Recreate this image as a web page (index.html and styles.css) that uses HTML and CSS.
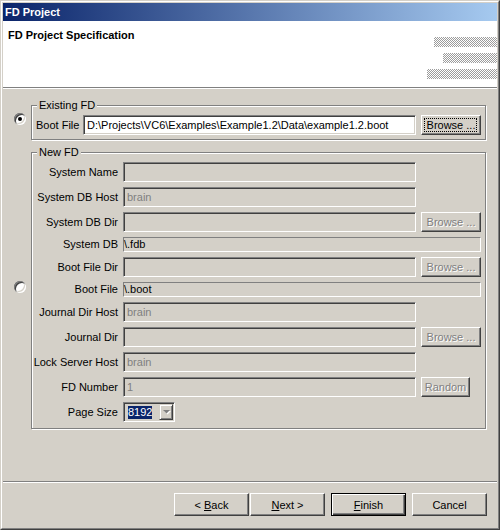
FILE: index.html
```html
<!DOCTYPE html>
<html>
<head>
<meta charset="utf-8">
<title>FD Project</title>
<link rel="stylesheet" href="styles.css">
</head>
<body>
<div class="window">
  <div class="frame">
    <div class="titlebar">FD Project</div>
    <div class="header">
      <div class="header-title">FD Project Specification</div>
      <div class="header-art">
        <span class="bar b1"></span>
        <span class="bar b2"></span>
        <span class="bar b3"></span>
      </div>
    </div>
    <div class="hsep"></div>
    <div class="content">
      <div class="option">
        <span class="radio checked"></span>
        <div class="group existing">
          <span class="legend">Existing FD</span>
          <div class="boot-row">
            <span class="lbl">Boot File</span>
            <div class="edit">D:\Projects\VC6\Examples\Example1.2\Data\example1.2.boot</div>
            <button class="btn focus">Browse ...</button>
          </div>
        </div>
      </div>
      <div class="option">
        <span class="radio"></span>
        <div class="group newfd">
          <span class="legend">New FD</span>
          <div class="grid">
            <span class="lbl-r">System Name</span>
            <div class="edit disabled"></div>
            <span></span>

            <span class="lbl-r">System DB Host</span>
            <div class="edit disabled">brain</div>
            <span></span>

            <span class="lbl-r">System DB Dir</span>
            <div class="edit disabled"></div>
            <button class="btn" disabled>Browse ...</button>

            <span class="lbl-r">System DB</span>
            <div class="static">\.fdb</div>

            <span class="lbl-r">Boot File Dir</span>
            <div class="edit disabled"></div>
            <button class="btn" disabled>Browse ...</button>

            <span class="lbl-r">Boot File</span>
            <div class="static">\.boot</div>

            <span class="lbl-r">Journal Dir Host</span>
            <div class="edit disabled">brain</div>
            <span></span>

            <span class="lbl-r">Journal Dir</span>
            <div class="edit disabled"></div>
            <button class="btn" disabled>Browse ...</button>

            <span class="lbl-r">Lock Server Host</span>
            <div class="edit disabled">brain</div>
            <span></span>

            <span class="lbl-r">FD Number</span>
            <div class="edit disabled">1</div>
            <button class="btn random" disabled>Random</button>

            <span class="lbl-r">Page Size</span>
            <div class="combo">
              <span class="sel">8192</span>
              <span class="drop">
                <svg width="7" height="5" viewBox="0 0 7 5"><polygon points="1,1 8,1 4.5,4.5" fill="#ffffff"/><polygon points="0,0 7,0 3.5,3.5" fill="#808080"/></svg>
              </span>
            </div>
            <span></span>
          </div>
        </div>
      </div>
    </div>
    <div class="divider"></div>
    <div class="footer">
      <div class="pair">
        <button class="btn nav">&lt; <u>B</u>ack</button>
        <button class="btn nav"><u>N</u>ext &gt;</button>
      </div>
      <button class="btn nav default"><u>F</u>inish</button>
      <button class="btn nav">Cancel</button>
    </div>
  </div>
</div>
</body>
</html>
```

FILE: styles.css
```css
* {
  box-sizing: border-box;
}

body {
  margin: 0;
  font-family: "Liberation Sans", Arial, sans-serif;
  font-size: 11px;
  color: #000;
}

.window {
  width: 500px;
  height: 530px;
  background: #d4d0c8;
  border: 1px solid;
  border-color: #d4d0c8 #404040 #404040 #d4d0c8;
}

.frame {
  height: 100%;
  border: 1px solid;
  border-color: #ffffff #808080 #808080 #ffffff;
  padding: 1px;
  display: flex;
  flex-direction: column;
}

.titlebar {
  flex: none;
  height: 18px;
  line-height: 18px;
  padding-left: 2px;
  background: linear-gradient(to right, #0a246a, #a6caf0);
  color: #fff;
  font-weight: bold;
}

.header {
  flex: none;
  height: 66px;
  background: #fff;
  display: flex;
  justify-content: space-between;
}

.header-title {
  padding: 8px 0 0 5px;
  font-weight: bold;
  line-height: 13px;
}

.header-art {
  display: flex;
  flex-direction: column;
  align-items: flex-end;
  gap: 6px;
  padding-top: 16px;
}

.bar {
  display: block;
  height: 10px;
  background: repeating-conic-gradient(#9c9c9c 0% 25%, #ffffff 0% 50%) 0 0 / 2px 2px;
}

.b1 { width: 63px; }
.b2 { width: 54px; }
.b3 { width: 70px; }

.hsep {
  flex: none;
  height: 2px;
  border-top: 1px solid #808080;
  border-bottom: 1px solid #ffffff;
}

.content {
  flex: 1;
  padding: 9px 11px 0 11px;
  display: flex;
  flex-direction: column;
  gap: 5px;
}

.option {
  display: flex;
  align-items: center;
  gap: 5px;
}

.radio {
  flex: none;
  position: relative;
  width: 12px;
  height: 12px;
  border-radius: 50%;
  background: #fff;
  box-shadow: inset 1px 1px 0 #808080, inset -1px -1px 0 #ffffff,
              inset 2px 2px 0 #404040, inset -2px -2px 0 #d4d0c8;
}

.radio.checked::after {
  content: "";
  position: absolute;
  left: 4px;
  top: 4px;
  width: 4px;
  height: 4px;
  border-radius: 50%;
  background: #000;
}

.group {
  position: relative;
  width: 456px;
  margin-top: 7px;
  border: 1px solid #808080;
  box-shadow: inset 1px 1px 0 #ffffff, 1px 1px 0 #ffffff;
}

.legend {
  position: absolute;
  top: -8px;
  left: 5px;
  padding: 0 2px;
  line-height: 14px;
  background: #d4d0c8;
}

.existing {
  padding: 9px 4px 4px 4px;
}

.boot-row {
  display: flex;
  align-items: center;
}

.boot-row .lbl {
  width: 47px;
  white-space: nowrap;
}

.boot-row .edit {
  width: 333px;
}

.boot-row .btn {
  margin-left: 5px;
}

.newfd {
  padding: 9px 0 6px 0;
}

.grid {
  display: grid;
  grid-template-columns: 86px 293px 60px;
  column-gap: 5px;
  row-gap: 5px;
  align-items: center;
}

.lbl-r {
  text-align: right;
  white-space: nowrap;
  line-height: 13px;
}

.edit {
  height: 20px;
  border: 1px solid;
  border-color: #808080 #ffffff #ffffff #808080;
  box-shadow: inset 1px 1px 0 #404040, inset -1px -1px 0 #d4d0c8;
  background: #fff;
  padding: 0 3px;
  line-height: 18px;
  white-space: nowrap;
  overflow: hidden;
}

.edit.disabled {
  background: #d4d0c8;
  color: #808080;
  padding-left: 3px;
}

.static {
  grid-column: 2 / 4;
  height: 15px;
  border: 1px solid;
  border-color: #808080 #ffffff #ffffff #808080;
  line-height: 13px;
  padding-left: 0;
  white-space: nowrap;
}

.btn {
  position: relative;
  width: 60px;
  height: 20px;
  padding: 0;
  margin: 0;
  font: inherit;
  color: #000;
  background: #d4d0c8;
  border: 1px solid;
  border-color: #ffffff #404040 #404040 #ffffff;
  box-shadow: inset -1px -1px 0 #808080;
  border-radius: 0;
  white-space: nowrap;
}

.btn:disabled {
  color: #808080;
  text-shadow: 1px 1px 0 #ffffff;
}

.btn.focus::after {
  content: "";
  position: absolute;
  inset: 2px 3px 2px 2px;
  border: 1px dotted #000;
}

.random {
  width: 49px;
  justify-self: start;
}

.combo {
  justify-self: start;
  width: 52px;
  height: 20px;
  border: 1px solid;
  border-color: #808080 #ffffff #ffffff #808080;
  box-shadow: inset 1px 1px 0 #404040, inset -1px -1px 0 #d4d0c8;
  background: #d4d0c8;
  display: flex;
  align-items: center;
  padding: 0 1px 0 4px;
}

.sel {
  background: #0a246a;
  color: #fff;
  line-height: 13px;
}

.drop {
  margin-left: auto;
  width: 14px;
  height: 16px;
  border: 1px solid;
  border-color: #d4d0c8 #404040 #404040 #d4d0c8;
  box-shadow: inset 1px 1px 0 #ffffff, inset -1px -1px 0 #808080;
  display: flex;
  align-items: center;
  justify-content: center;
}

.drop svg {
  display: block;
  overflow: visible;
}

.divider {
  flex: none;
  height: 2px;
  border-top: 1px solid #808080;
  border-bottom: 1px solid #ffffff;
}

.footer {
  flex: none;
  height: 44px;
  display: flex;
  justify-content: flex-end;
  align-items: flex-start;
  gap: 6px;
  padding: 10px 10px 0 0;
}

.pair {
  display: flex;
  gap: 1px;
}

.btn.nav {
  width: 75px;
  height: 23px;
}

.btn.default {
  border: 1px solid #000;
  box-shadow: inset 1px 1px 0 #ffffff, inset -1px -1px 0 #404040, inset -2px -2px 0 #808080;
}
```
